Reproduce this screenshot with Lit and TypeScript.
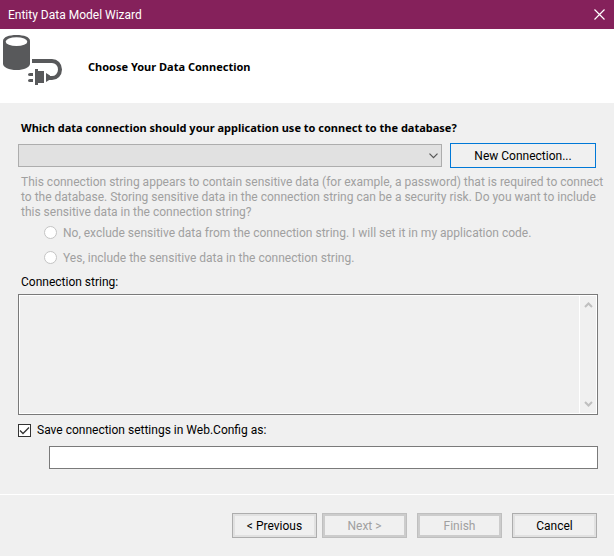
import { LitElement, html, css, svg } from "lit";
import { customElement, property, state } from "lit/decorators.js";

const chevron = (up: boolean) => svg`<path d=${up ? "M1 6L4.500 2.500L8 6" : "M1 2L4.500 5.500L8 2"} fill="none" stroke="#bfbfbf" stroke-width="2" />`;

@customElement("wizard-header")
class WizardHeader extends LitElement {
  @property() heading = "";

  static styles = css`
    :host {
      display: block;
      background: #fff;
    }
    .header {
      display: flex;
      align-items: center;
      gap: 24px;
      height: 74px;
    }
    .icon {
      flex: none;
      align-self: flex-start;
      width: 64px;
      height: 64px;
    }
    .heading {
      margin: 0;
      padding-top: 2px;
      font-family: "Noto Sans", sans-serif;
      font-size: 11px;
      line-height: 16px;
      font-weight: 700;
    }
  `;

  render() {
    return html`
      <header class="header">
        <svg class="icon" viewBox="0 0 64 64" aria-hidden="true">
          <path fill="#58595b" d="M3 12C3 8 9 6 16.500 6S30 8 30 12V34.500C30 38.500 24 41 16.500 41S3 38.500 3 34.500Z" />
          <ellipse cx="16.500" cy="12.700" rx="10.800" ry="4.400" fill="#fff" />
          <path fill="none" stroke="#58595b" stroke-width="4" d="M32 32H52A8 8.500 0 0 1 52 49H49" />
          <path fill="#58595b" d="M35 40H38V42H44V54H38V56H35ZM46 44L50 46.500V50.500L46 53ZM33 44H30Q28 44 28 45.500T30 47H33ZM33 50H30Q28 50 28 51.500T30 53H33Z" />
        </svg>
        <h1 class="heading">${this.heading}</h1>
      </header>
    `;
  }
}

@customElement("app-root")
class AppRoot extends LitElement {
  @state() private saveSettings = true;

  static styles = css`
    :host {
      display: flex;
      flex-direction: column;
      min-height: 100vh;
      background: #f0f0f0;
      color: #000;
      font-family: Roboto, sans-serif;
      font-size: 12px;
      line-height: 16px;
    }
    * {
      box-sizing: border-box;
    }
    button,
    input,
    select,
    textarea {
      margin: 0;
      font: inherit;
      color: inherit;
    }
    .titlebar {
      display: flex;
      align-items: center;
      justify-content: space-between;
      height: 29px;
      padding-left: 8px;
      background: #85215b;
      color: #fff;
    }
    .close {
      display: grid;
      place-items: center;
      width: 29px;
      height: 27px;
      padding: 0;
      border: 0;
      background: none;
    }
    .body {
      display: flex;
      flex-direction: column;
      padding: 17px 16px 25px 18px;
    }
    .question {
      padding-left: 3px;
      font-family: "Noto Sans", sans-serif;
      font-size: 11px;
      font-weight: 700;
    }
    .connection {
      display: flex;
      align-items: center;
      gap: 8px;
      margin-top: 7px;
      padding-right: 2px;
    }
    .picker {
      display: grid;
      flex: 1;
    }
    .picker > * {
      grid-area: 1 / 1;
    }
    .select {
      width: 100%;
      height: 23px;
      border: 1px solid #adadad;
      border-radius: 0;
      background: #e1e1e1;
      appearance: none;
      opacity: 1;
    }
    .arrow {
      align-self: center;
      justify-self: end;
      margin-right: 4px;
      pointer-events: none;
    }
    .new {
      width: 146px;
      height: 25px;
      padding: 0;
      border: 1px solid #0078d7;
      background: #f0f0f0;
    }
    .sensitive {
      min-width: 0;
      margin: 0;
      padding: 0;
      border: 0;
      color: #a0a0a0;
    }
    .notice {
      margin: 7px -12px 0 0;
      padding-left: 3px;
      line-height: 15px;
    }
    .option {
      display: flex;
      align-items: center;
      gap: 6px;
      height: 25px;
      padding-left: 26px;
    }
    .radio {
      flex: none;
      width: 13px;
      height: 13px;
      border: 1px solid #c4c4c4;
      border-radius: 50%;
      background: #fff;
      appearance: none;
    }
    .string-label {
      padding: 4px 3px;
    }
    .string {
      display: grid;
      grid-template-columns: 1fr 18px;
      height: 121px;
      padding: 0;
      border: 1px solid #7a7a7a;
    }
    .textarea {
      display: block;
      width: 100%;
      height: 100%;
      padding: 2px;
      border: 1px solid #fff;
      border-right: 0;
      border-radius: 0;
      background: #f0f0f0;
      resize: none;
      outline: none;
    }
    .track {
      display: flex;
      flex-direction: column;
      align-items: center;
      justify-content: space-between;
      padding: 5px 0;
      border: 1px solid #fff;
    }
    .save {
      display: flex;
      align-items: center;
      gap: 6px;
      margin-top: 7px;
    }
    .tick {
      display: grid;
      flex: none;
    }
    .tick > * {
      grid-area: 1 / 1;
    }
    .checkbox {
      width: 13px;
      height: 13px;
      border: 1px solid #333;
      background: #fff;
      appearance: none;
    }
    .mark {
      pointer-events: none;
    }
    .name {
      height: 23px;
      margin: 8px 0 0 31px;
      padding: 2px 4px;
      border: 1px solid #7a7a7a;
      border-radius: 0;
      background: #fff;
    }
    .footer {
      display: flex;
      justify-content: flex-end;
      gap: 10px;
      padding: 18px 17px;
      border-top: 1px solid #fff;
    }
    .pair {
      display: flex;
      gap: 5px;
    }
    .step {
      width: 85px;
      height: 25px;
      padding: 0;
      border: 1px solid #adadad;
      background: #f0f0f0;
      box-shadow: inset 0 0 0 2px #e1e1e1;
    }
    .step:disabled {
      border-color: #bfbfbf;
      box-shadow: inset 0 0 0 2px #ccc;
      color: #a0a0a0;
    }
  `;

  private toggleSave(event: Event) {
    this.saveSettings = (event.target as HTMLInputElement).checked;
  }

  render() {
    return html`
      <div class="titlebar">
        <span>Entity Data Model Wizard</span>
        <button class="close" aria-label="Close">
          <svg width="11" height="11" viewBox="0 0 11 11">
            <path d="M.5 .5L10.500 10.500M10.500 .5L.5 10.500" stroke="#fff" stroke-width="1.200" />
          </svg>
        </button>
      </div>
      <wizard-header heading="Choose Your Data Connection"></wizard-header>
      <main class="body">
        <label class="question" for="connection">Which data connection should your application use to connect to the database?</label>
        <div class="connection">
          <div class="picker">
            <select class="select" id="connection" disabled></select>
            <svg class="arrow" width="9" height="6" viewBox="0 0 9 6" aria-hidden="true">
              <path d="M.5 .7L4.500 4.700L8.500 .7" fill="none" stroke="#555" stroke-width="1.200" />
            </svg>
          </div>
          <button class="new">New Connection...</button>
        </div>
        <fieldset class="sensitive" disabled aria-describedby="notice">
          <p class="notice" id="notice">
            This connection string appears to contain sensitive data (for example, a password) that is required to connect
            to the database. Storing sensitive data in the connection string can be a security risk. Do you want to include
            this sensitive data in the connection string?
          </p>
          <label class="option">
            <input class="radio" type="radio" name="sensitive" value="exclude" />
            No, exclude sensitive data from the connection string. I will set it in my application code.
          </label>
          <label class="option">
            <input class="radio" type="radio" name="sensitive" value="include" />
            Yes, include the sensitive data in the connection string.
          </label>
        </fieldset>
        <label class="string-label" for="string">Connection string:</label>
        <div class="string">
          <textarea class="textarea" id="string" readonly></textarea>
          <div class="track" aria-hidden="true">
            <svg width="9" height="8" viewBox="0 0 9 8">${chevron(true)}</svg>
            <svg width="9" height="8" viewBox="0 0 9 8">${chevron(false)}</svg>
          </div>
        </div>
        <label class="save">
          <span class="tick">
            <input class="checkbox" type="checkbox" .checked=${this.saveSettings} @change=${this.toggleSave} />
            ${this.saveSettings
              ? html`<svg class="mark" width="13" height="13" viewBox="0 0 13 13" aria-hidden="true">
                  <path d="M2 6.500L5 9.500L11 3.500" fill="none" stroke="#333" stroke-width="1.300" />
                </svg>`
              : ""}
          </span>
          <span>Save connection settings in Web.Config as:</span>
        </label>
        <input class="name" type="text" aria-label="Connection settings name" ?disabled=${!this.saveSettings} />
      </main>
      <footer class="footer">
        <div class="pair">
          <button class="step">&lt; Previous</button>
          <button class="step" disabled>Next &gt;</button>
        </div>
        <button class="step" disabled>Finish</button>
        <button class="step">Cancel</button>
      </footer>
    `;
  }
}
